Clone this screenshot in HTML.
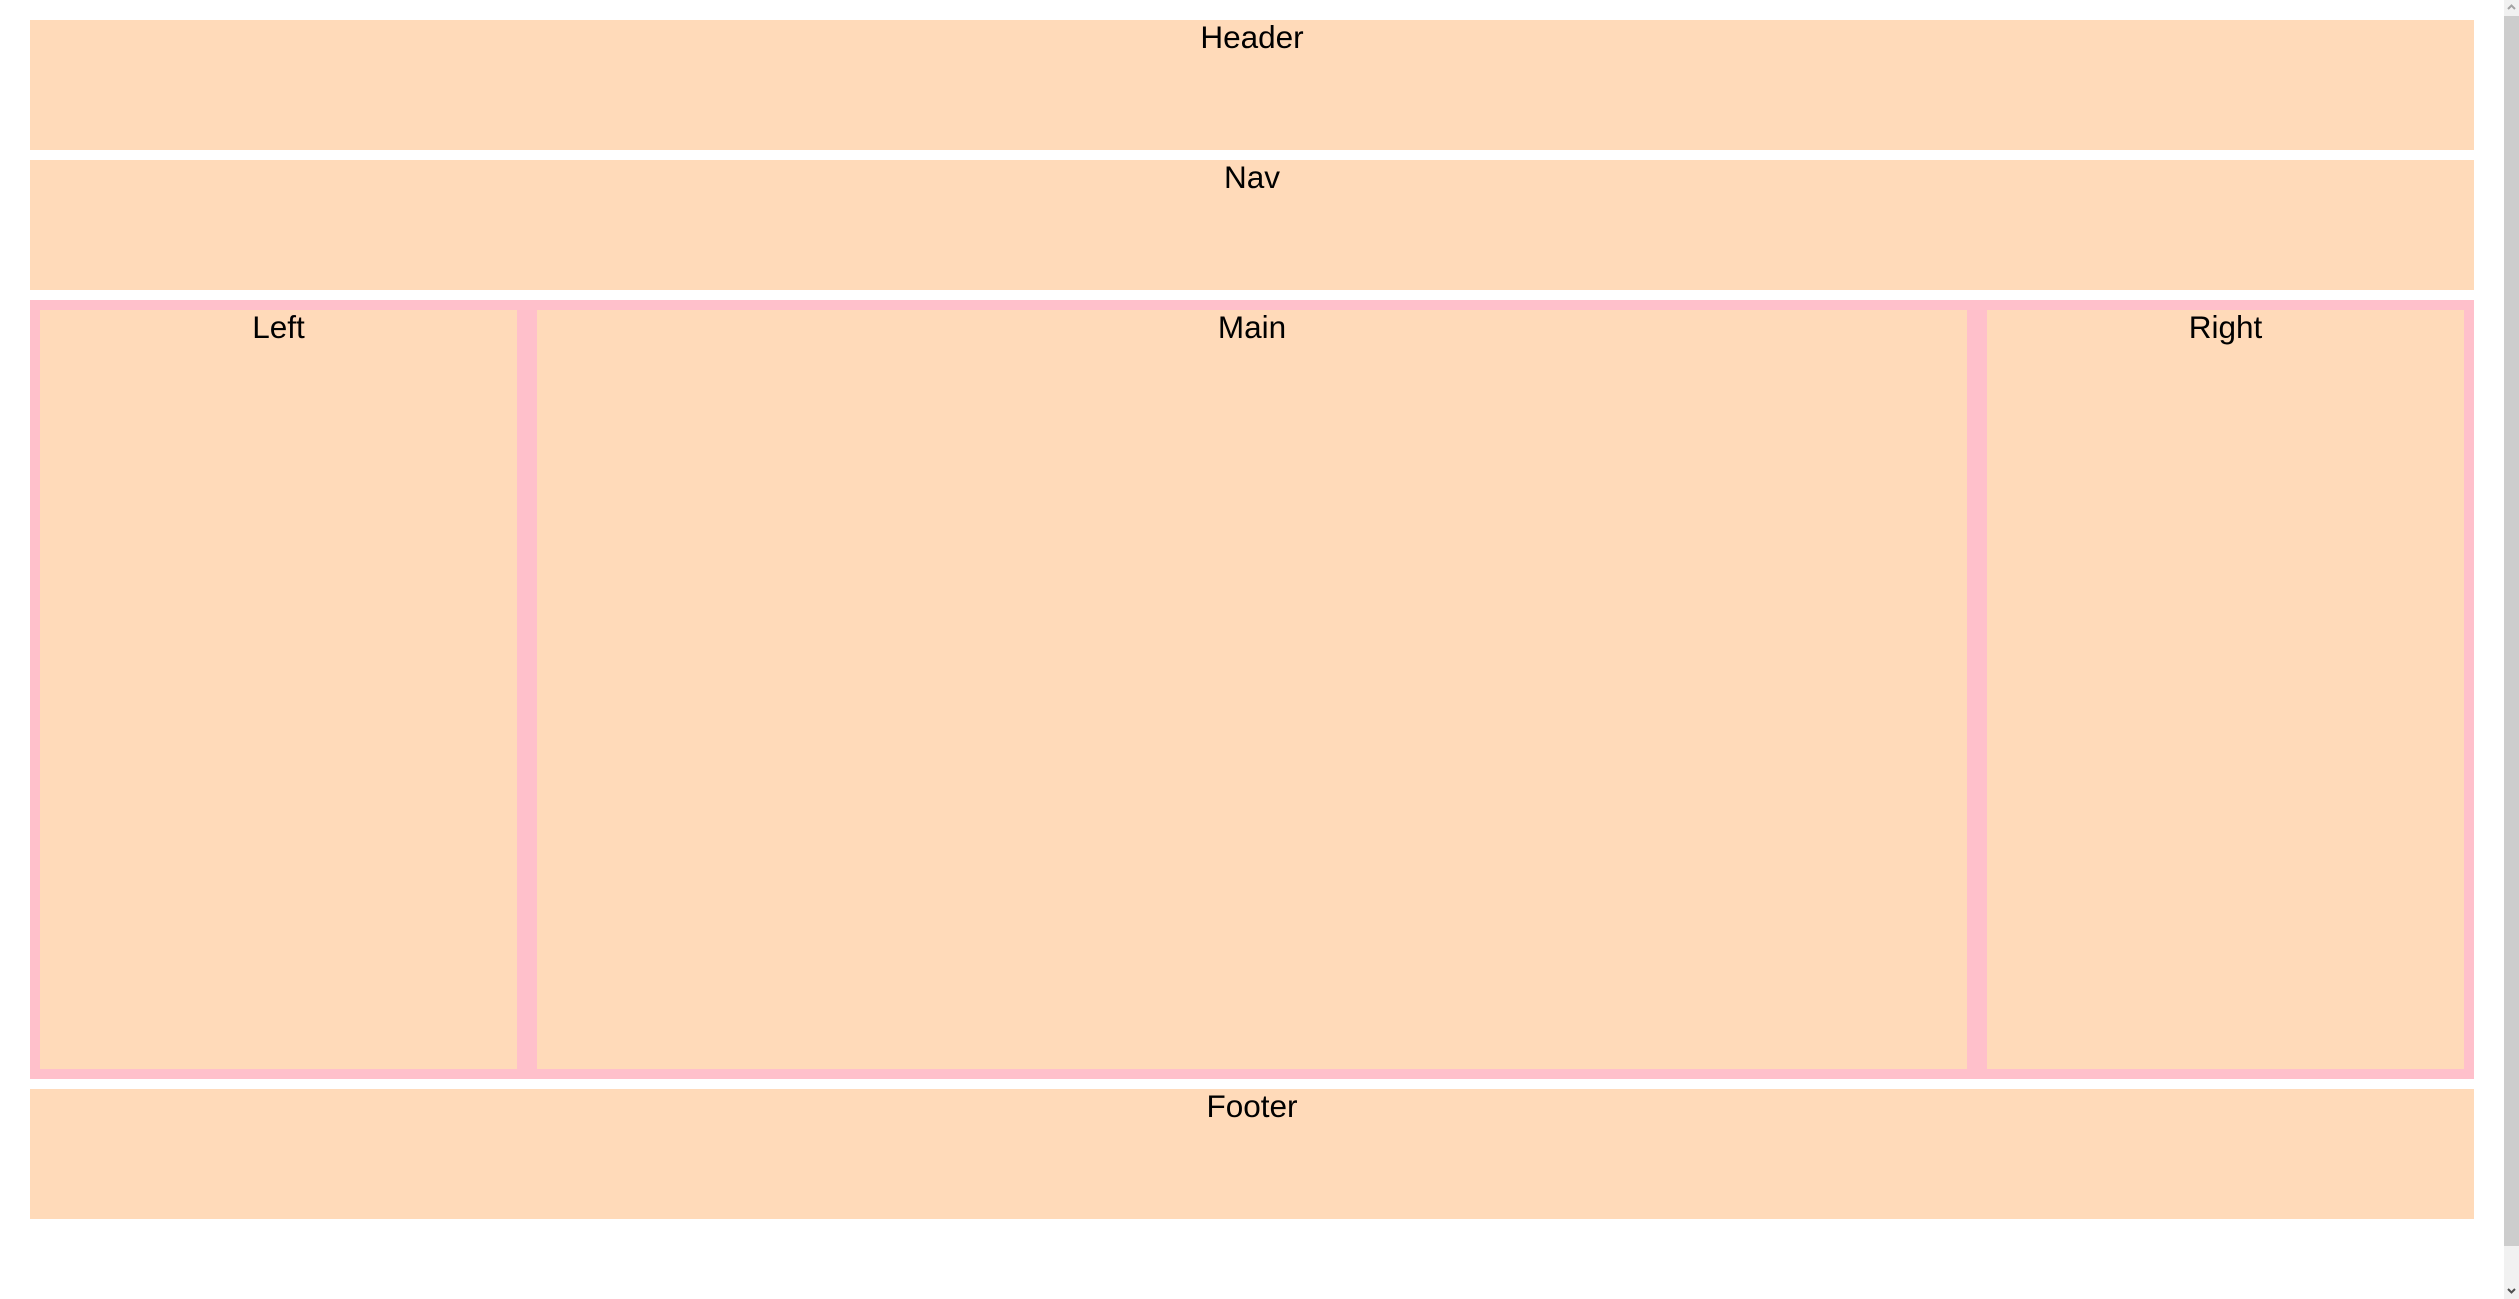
<!DOCTYPE html>
<html><head><meta charset="utf-8"><style>
html,body{margin:0;padding:0;width:2519px;height:1299px;overflow:hidden;background:#fff;font-family:"Liberation Sans",Arial,sans-serif;}
.b{position:absolute;background:#ffdab9;text-align:center;font-size:31.5px;line-height:34px;color:#000;padding-top:0;box-sizing:border-box;}
.c{position:absolute;background:#ffc0cb;}
.sb{position:absolute;left:2504px;top:0;width:15px;height:1299px;background:#f1f1f1;}
.th{position:absolute;left:2504px;top:16px;width:15px;height:1230px;background:#cdcdcd;}
</style></head><body>
<div class="b" style="left:30px;top:20px;width:2444px;height:130px;">Header</div>
<div class="b" style="left:30px;top:160px;width:2444px;height:130px;">Nav</div>
<div class="c" style="left:30px;top:300px;width:2444px;height:779px;"></div>
<div class="b" style="left:40px;top:310px;width:477px;height:759px;">Left</div>
<div class="b" style="left:537px;top:310px;width:1430px;height:759px;">Main</div>
<div class="b" style="left:1987px;top:310px;width:477px;height:759px;">Right</div>
<div class="b" style="left:30px;top:1089px;width:2444px;height:130px;">Footer</div>
<div class="sb"></div>
<div class="th"></div>
<svg style="position:absolute;left:2504px;top:0" width="15" height="16"><path d="M4 9 L7.5 5.5 L11 9" stroke="#a3a3a3" stroke-width="2" fill="none"/></svg>
<svg style="position:absolute;left:2504px;top:1283px" width="15" height="16"><path d="M4 6 L7.5 9.5 L11 6" stroke="#505050" stroke-width="2" fill="none"/></svg>
</body></html>
